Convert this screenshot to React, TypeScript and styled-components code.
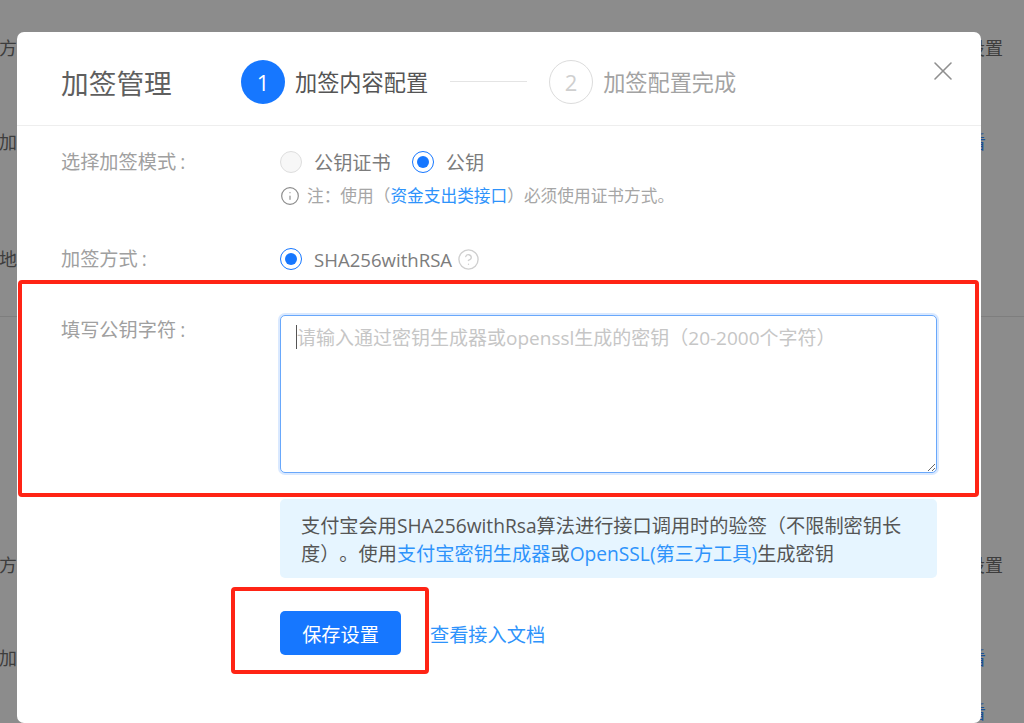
import React from 'react';
import styled, { createGlobalStyle } from 'styled-components';
import { Info, CircleHelp, X } from 'lucide-react';

const GlobalStyle = createGlobalStyle`
  html, body {
    margin: 0;
    padding: 0;
    width: 1024px;
    height: 723px;
    overflow: hidden;
    background: #8c8c8c;
    font-family: 'Open Sans', 'Noto Sans CJK SC', sans-serif;
    text-spacing-trim: space-all;
  }
  * {
    box-sizing: border-box;
  }
`;

const Page = styled.div`
  position: relative;
  width: 1024px;
  height: 723px;
  overflow: hidden;
  background: #8c8c8c;
`;

const BgList = styled.div`
  display: flex;
  flex-direction: column;
  height: 723px;
`;

const BgRow = styled.div<{ $height: number; $right: number; $drop?: number; $line?: boolean }>`
  display: flex;
  justify-content: space-between;
  align-items: center;
  flex: none;
  height: ${(p) => p.$height}px;
  padding-top: ${(p) => p.$drop || 0}px;
  padding-right: ${(p) => p.$right}px;
  margin-left: -1px;
  font-size: 18px;
  line-height: 18px;
  color: #3d3d3d;
  border-bottom: ${(p) => (p.$line ? '1px solid #7e7e7e' : 'none')};
`;

const BgLink = styled.span`
  color: #1d4f96;
`;

const Modal = styled.div`
  position: absolute;
  left: 17px;
  top: 32px;
  width: 964px;
  height: 691px;
  background: #fff;
  border-radius: 7px;
`;

const Header = styled.div`
  display: flex;
  align-items: center;
  height: 94px;
  padding: 6px 22px 0 44px;
  border-bottom: 1px solid #eeeeee;
`;

const Title = styled.div`
  width: 180px;
  flex: none;
  font-size: 27.7px;
  color: #5f5f5f;
`;

const StepCircle = styled.div<{ $active?: boolean }>`
  display: flex;
  align-items: center;
  justify-content: center;
  flex: none;
  width: 44px;
  height: 44px;
  border-radius: 50%;
  font-size: 22px;
  background: ${(p) => (p.$active ? '#1677ff' : '#fff')};
  color: ${(p) => (p.$active ? '#fff' : '#cfcfcf')};
  border: ${(p) => (p.$active ? 'none' : '1px solid #dcdcdc')};
`;

const StepLabel = styled.div<{ $active?: boolean }>`
  flex: none;
  margin-left: 10px;
  font-size: 22.2px;
  color: ${(p) => (p.$active ? '#555555' : '#a3a3a3')};
`;

const StepLine = styled.div`
  flex: none;
  width: 77px;
  height: 1px;
  margin: 0 22px;
  background: #e4e4e4;
`;

const CloseButton = styled.div`
  display: flex;
  margin-left: auto;
  margin-top: -22px;
  color: #8f8f8f;
`;

const Body = styled.div`
  padding: 0 44px 0 44px;
`;

const FormRow = styled.div<{ $top: number }>`
  display: flex;
  margin-top: ${(p) => p.$top}px;
`;

const Label = styled.div`
  flex: none;
  width: 219px;
  font-size: 19.2px;
  line-height: 30px;
  color: #a0a0a0;
`;

const Colon = styled.span`
  margin-left: 4px;
`;

const Field = styled.div`
  flex: 1;
  min-width: 0;
`;

const RadioGroup = styled.div`
  display: flex;
  align-items: center;
  height: 30px;
`;

const RadioDot = styled.span<{ $checked?: boolean }>`
  display: inline-flex;
  align-items: center;
  justify-content: center;
  flex: none;
  width: 22px;
  height: 22px;
  border-radius: 50%;
  background: ${(p) => (p.$checked ? '#fff' : '#f7f7f7')};
  border: 1px solid ${(p) => (p.$checked ? '#1677ff' : '#dedede')};

  &::after {
    content: '';
    display: ${(p) => (p.$checked ? 'block' : 'none')};
    width: 12px;
    height: 12px;
    border-radius: 50%;
    background: #1677ff;
  }
`;

const RadioText = styled.span`
  margin: 0 21px 0 12px;
  font-size: 19.2px;
  color: #7c7c7c;
`;

const AlgoText = styled(RadioText)`
  margin-right: 5px;
  font-size: 18.6px;
`;

const Note = styled.div`
  display: flex;
  align-items: center;
  gap: 7px;
  margin-top: 7px;
  font-size: 16.7px;
  line-height: 24px;
  color: #a6a6a6;
`;

const Help = styled.span`
  display: inline-flex;
  color: #cfcfcf;
`;

const Link = styled.a`
  color: #2e93fb;
`;

const Highlight = styled.div`
  position: absolute;
  border: 4px solid #ff2415;
  border-radius: 4px;
  pointer-events: none;
`;

const KeyHighlight = styled(Highlight)`
  left: 18px;
  top: 280px;
  width: 961px;
  height: 217px;
`;

const SaveHighlight = styled(Highlight)`
  left: 231px;
  top: 587px;
  width: 198px;
  height: 87px;
`;

const TextareaWrap = styled.div`
  position: relative;
  display: flex;
`;

const KeyInput = styled.textarea`
  display: block;
  width: 100%;
  height: 158px;
  padding: 7px 16px;
  font-family: inherit;
  font-size: 19px;
  line-height: 30px;
  border: 1px solid #69a8fb;
  border-radius: 5px;
  outline: none;
  resize: vertical;
  box-shadow: 0 0 0 2px rgba(22, 119, 255, 0.16);

  &::placeholder {
    color: #c6c6c6;
  }
`;

const Caret = styled.span`
  position: absolute;
  left: 16px;
  top: 10px;
  width: 1px;
  height: 24px;
  background: #555;
`;

const Tip = styled.div`
  margin-top: 26px;
  padding: 13px 21px 10px;
  font-size: 19.2px;
  line-height: 28px;
  color: #555555;
  background: #e6f5ff;
  border-radius: 5px;
`;

const Actions = styled.div`
  display: flex;
  align-items: center;
  margin-top: 33px;
  gap: 29px;
`;

const SaveButton = styled.button`
  width: 121px;
  height: 44px;
  padding: 2px 0 0;
  font-family: inherit;
  font-size: 19.2px;
  color: #fff;
  background: #1677ff;
  border: none;
  border-radius: 5px;
`;

const DocLink = styled(Link)`
  margin-top: 2px;
  font-size: 19.2px;
`;

export default function App() {
  return (
    <Page>
      <GlobalStyle />
      <BgList>
        <BgRow $height={96} $right={21}>
          <span>方式</span>
          <span>设置</span>
        </BgRow>
        <BgRow $height={92} $right={38}>
          <span>加签</span>
          <BgLink>查看</BgLink>
        </BgRow>
        <BgRow $height={129} $right={38} $drop={14} $line>
          <span>地址</span>
        </BgRow>
        <BgRow $height={200} $right={21} />
        <BgRow $height={96} $right={21}>
          <span>方式</span>
          <span>设置</span>
        </BgRow>
        <BgRow $height={90} $right={38}>
          <span>加签</span>
          <BgLink>查看</BgLink>
        </BgRow>
        <BgRow $height={18} $right={38}>
          <span />
          <BgLink>查看</BgLink>
        </BgRow>
      </BgList>

      <Modal>
        <Header>
          <Title>加签管理</Title>
          <StepCircle $active>1</StepCircle>
          <StepLabel $active>加签内容配置</StepLabel>
          <StepLine />
          <StepCircle>2</StepCircle>
          <StepLabel>加签配置完成</StepLabel>
          <CloseButton>
            <X size={32} strokeWidth={1.2} />
          </CloseButton>
        </Header>

        <Body>
          <FormRow $top={21}>
            <Label>
              选择加签模式<Colon>:</Colon>
            </Label>
            <Field>
              <RadioGroup>
                <RadioDot />
                <RadioText>公钥证书</RadioText>
                <RadioDot $checked />
                <RadioText>公钥</RadioText>
              </RadioGroup>
              <Note>
                <Info size={20} strokeWidth={1.4} color="#8c8c8c" />
                <span>
                  注&#xFF1A;使用&#xFF08;<Link>资金支出类接口</Link>&#xFF09;必须使用证书方式&#x3002;
                </span>
              </Note>
            </Field>
          </FormRow>

          <FormRow $top={36}>
            <Label>
              加签方式<Colon>:</Colon>
            </Label>
            <RadioGroup>
              <RadioDot $checked />
              <AlgoText>SHA256withRSA</AlgoText>
              <Help>
                <CircleHelp size={23} strokeWidth={1.4} />
              </Help>
            </RadioGroup>
          </FormRow>

          <FormRow $top={41}>
            <Label>
              填写公钥字符<Colon>:</Colon>
            </Label>
            <Field>
              <TextareaWrap>
                <KeyInput placeholder="请输入通过密钥生成器或openssl生成的密钥&#xFF08;20-2000个字符&#xFF09;" />
                <Caret />
              </TextareaWrap>
              <Tip>
                支付宝会用SHA256withRsa算法进行接口调用时的验签&#xFF08;不限制密钥长度&#xFF09;&#x3002;使用
                <Link>支付宝密钥生成器</Link>或<Link>OpenSSL(第三方工具)</Link>生成密钥
              </Tip>
              <Actions>
                <SaveButton>保存设置</SaveButton>
                <DocLink>查看接入文档</DocLink>
              </Actions>
            </Field>
          </FormRow>
        </Body>
      </Modal>

      <KeyHighlight />
      <SaveHighlight />
    </Page>
  );
}
